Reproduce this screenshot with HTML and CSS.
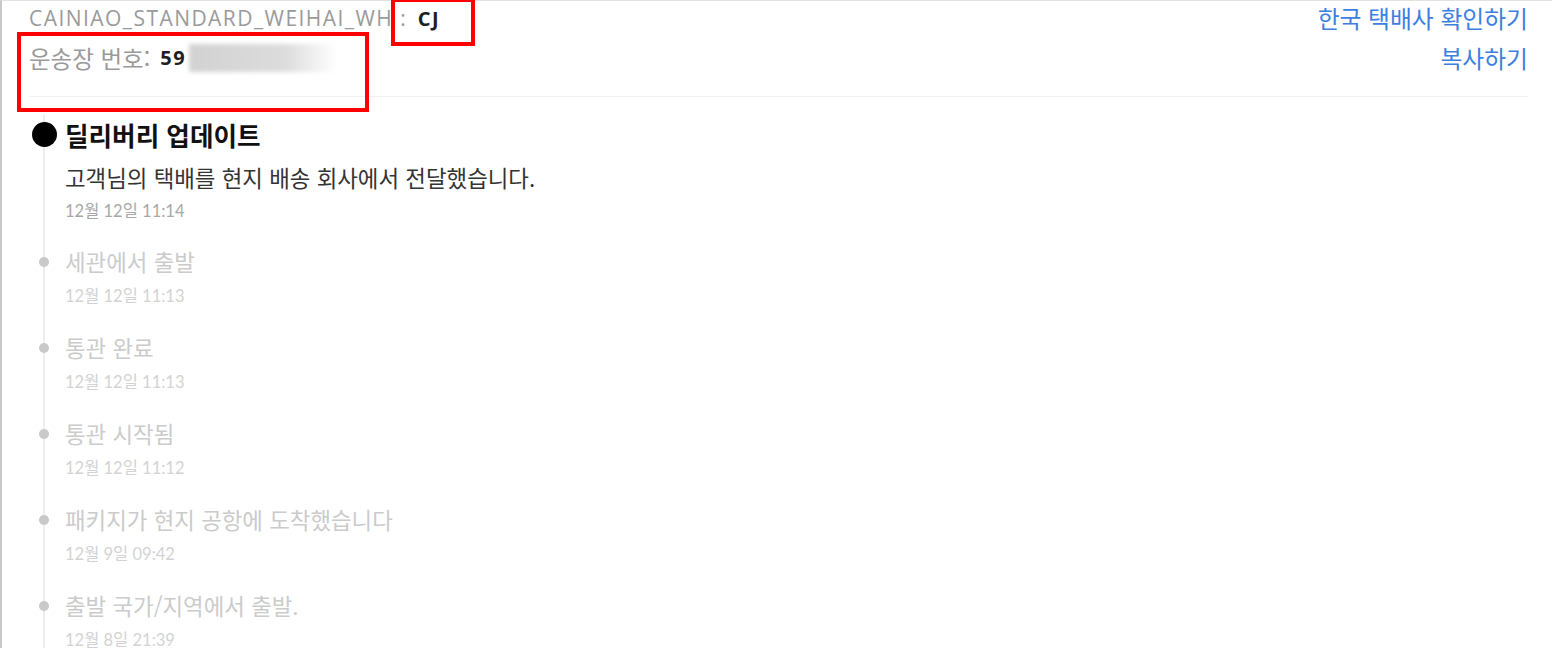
FILE: index.html
```html
<!DOCTYPE html>
<html lang="ko">
<head>
  <meta charset="UTF-8">
  <meta name="viewport" content="width=device-width, initial-scale=1.0">
  <title>배송 조회</title>
  <link rel="stylesheet" href="styles.css">
</head>
<body>
  <div class="tracking">
    <div class="track-head">
      <div class="head-left">
        <div class="head-line">
          <span class="label">CAINIAO_STANDARD_WEIHAI_WH<span class="colon">:</span></span>
          <span class="value">CJ</span>
        </div>
        <div class="head-line second">
          <span class="label">운송장 번호:</span>
          <span class="value">59</span><span class="masked"></span>
        </div>
      </div>
      <div class="head-right">
        <a href="#" class="link">한국 택배사 확인하기</a>
        <a href="#" class="link second">복사하기</a>
      </div>
    </div>

    <div class="timeline">
      <div class="event current">
        <div class="marker"><span class="dot"></span></div>
        <div class="event-body">
          <div class="event-title">딜리버리 업데이트</div>
          <div class="event-desc">고객님의 택배를 현지 배송 회사에서 전달했습니다.</div>
          <div class="event-time">12월 12일 11:14</div>
        </div>
      </div>
      <div class="event">
        <div class="marker"><span class="dot"></span></div>
        <div class="event-body">
          <div class="event-title">세관에서 출발</div>
          <div class="event-time">12월 12일 11:13</div>
        </div>
      </div>
      <div class="event">
        <div class="marker"><span class="dot"></span></div>
        <div class="event-body">
          <div class="event-title">통관 완료</div>
          <div class="event-time">12월 12일 11:13</div>
        </div>
      </div>
      <div class="event">
        <div class="marker"><span class="dot"></span></div>
        <div class="event-body">
          <div class="event-title">통관 시작됨</div>
          <div class="event-time">12월 12일 11:12</div>
        </div>
      </div>
      <div class="event">
        <div class="marker"><span class="dot"></span></div>
        <div class="event-body">
          <div class="event-title">패키지가 현지 공항에 도착했습니다</div>
          <div class="event-time">12월 9일 09:42</div>
        </div>
      </div>
      <div class="event">
        <div class="marker"><span class="dot"></span></div>
        <div class="event-body">
          <div class="event-title">출발 국가/지역에서 출발.</div>
          <div class="event-time">12월 8일 21:39</div>
        </div>
      </div>
    </div>

    <div class="mark mark-carrier"></div>
    <div class="mark mark-number"></div>
  </div>
</body>
</html>
```

FILE: styles.css
```css
body {
  margin: 0;
  padding: 0;
  background: #fff;
  font-family: "Noto Sans CJK KR", "Noto Sans", sans-serif;
  overflow: hidden;
}
.tracking {
  position: relative;
  height: 648px;
  box-sizing: border-box;
  border-left: 2px solid #c8c8c8;
  border-top: 1px solid #e2e2e2;
  padding: 0 24px 0 27px;
}

/* header */
.track-head {
  display: flex;
  justify-content: space-between;
  padding-bottom: 21px;
  border-bottom: 1px solid #f0f0f0;
}
.head-line {
  height: 34px;
  line-height: 34px;
  white-space: nowrap;
}
.head-line.second {
  margin-top: 6px;
  display: flex;
  align-items: center;
}
.label {
  font-family: "Open Sans", "Noto Sans CJK KR", sans-serif;
  font-size: 21px;
  letter-spacing: 1.45px;
  color: #9a9a9a;
}
.colon {
  margin-left: 7px;
}
.head-line.second .label {
  font-family: "Noto Sans CJK KR", sans-serif;
  font-size: 23.5px;
  letter-spacing: 0;
}
.value {
  font-family: "Open Sans", sans-serif;
  font-weight: 700;
  font-size: 20px;
  letter-spacing: 1.5px;
  color: #1e1e1e;
  margin-left: 6px;
}
.head-line.second .value {
  margin-left: 10px;
}
.masked {
  display: inline-block;
  width: 148px;
  height: 28px;
  margin-left: 3px;
  background: linear-gradient(to right, #d2d2d2 0%, #dcdcdc 65%, #fff 100%);
  filter: blur(2px);
}
.head-right {
  display: flex;
  flex-direction: column;
  align-items: flex-end;
}
.link {
  font-size: 23.8px;
  line-height: 34px;
  color: #3d7fe0;
  text-decoration: none;
}
.link.second {
  margin-top: 6px;
}

/* timeline */
.timeline {
  margin-top: 18px;
}
.event {
  display: grid;
  grid-template-columns: 30px 1fr;
  column-gap: 6px;
}
.marker {
  background: linear-gradient(#eeeeee, #eeeeee) no-repeat center top / 2px 100%;
  display: flex;
  justify-content: center;
  align-items: flex-start;
}
.dot {
  width: 10px;
  height: 10px;
  border-radius: 50%;
  background: #c9c9c9;
  margin-top: 13px;
}
.event.current .dot {
  width: 25px;
  height: 25px;
  background: #000;
  margin-top: 7px;
}
.event-body {
  padding-bottom: 16px;
}
.event-title {
  font-size: 22.4px;
  line-height: 35px;
  color: #cbcbcb;
}
.event-time {
  font-family: Lato, "Noto Sans CJK KR", sans-serif;
  font-size: 16.5px;
  line-height: 35px;
  color: #d3d3d3;
}
.event.current .event-body {
  padding-bottom: 21px;
}
.event.current .event-title {
  font-size: 25.6px;
  font-weight: 700;
  line-height: 40px;
  color: #111;
}
.event-desc {
  font-size: 22.4px;
  line-height: 44px;
  color: #333;
}
.event.current .event-time {
  line-height: 24px;
  color: #a8a8a8;
}

/* screenshot annotation boxes */
.mark {
  position: absolute;
  border: 4px solid #f00;
  box-sizing: border-box;
}
.mark-carrier {
  left: 389px;
  top: -3px;
  width: 84px;
  height: 48px;
}
.mark-number {
  left: 15px;
  top: 31px;
  width: 352px;
  height: 80px;
}
```
